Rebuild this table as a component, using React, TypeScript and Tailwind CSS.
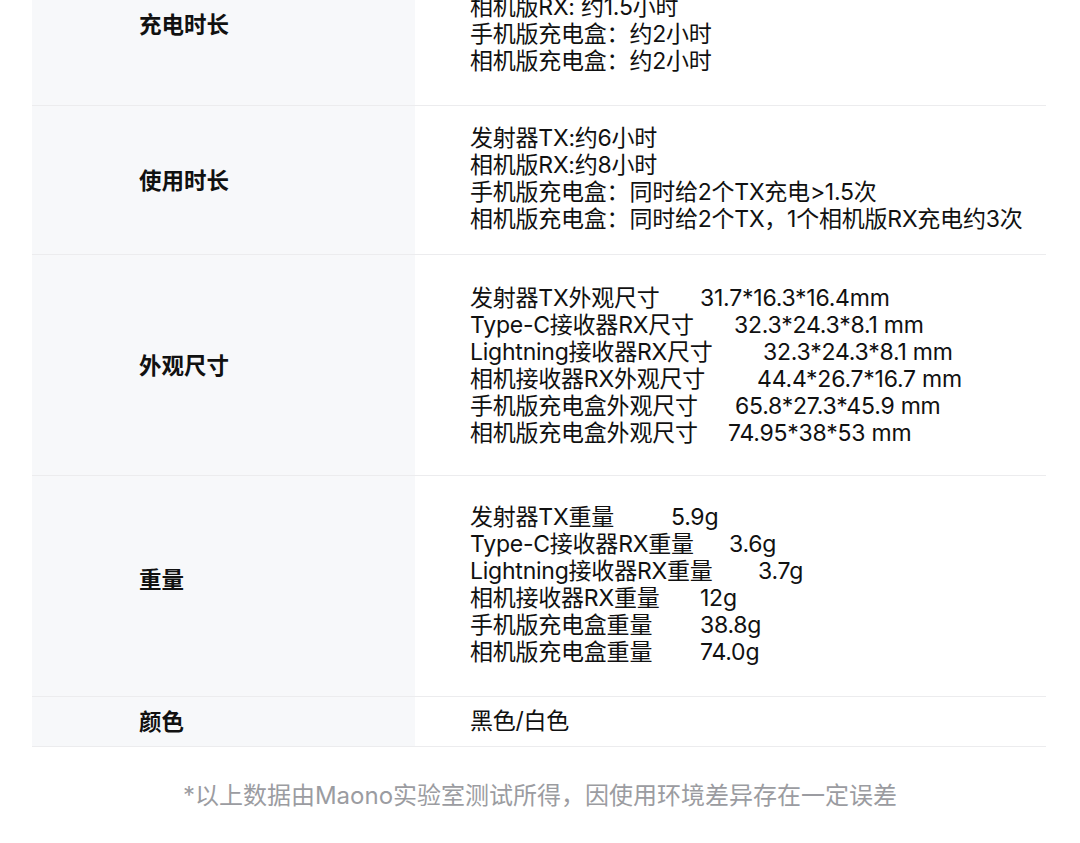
import React from "react";

type Line = { name: string; value?: string; w?: number };

const FONT = "font-['Inter','Noto_Sans_CJK_SC',sans-serif]";

function Row({
  label,
  lines,
  h,
  labelShift = "",
}: {
  label: string;
  lines: React.ReactNode;
  h: string;
  labelShift?: string;
}) {
  return (
    <div className={`flex ${h} border-b border-[#ececee]`}>
      <div className="w-[383px] shrink-0 bg-[#f7f8fa] flex items-center pl-[107px]">
        <span className={`text-[22.5px] font-bold text-[#111] leading-[27px] ${labelShift}`}>{label}</span>
      </div>
      <div className="flex-1 flex flex-col justify-center pl-[55px] text-[23px] leading-[27px] text-[#111] tracking-[-0.01em]">
        {lines}
      </div>
    </div>
  );
}

function Pairs({ items }: { items: Line[] }) {
  return (
    <>
      {items.map((it, i) => (
        <div key={i} className="flex whitespace-nowrap">
          <span className="inline-block shrink-0" style={{ width: it.w }}>
            {it.name}
          </span>
          <span>{it.value}</span>
        </div>
      ))}
    </>
  );
}

export default function App() {
  return (
    <div className={`w-[1080px] h-[843px] overflow-hidden bg-white ${FONT}`}>
      <div className="mt-[-65px] mx-[32px] w-[1014px]">
        <Row
          label="充电时长"
          h="h-[171px] pt-[2px]"
          labelShift="mt-[6px]"
          lines={
            <>
              <div>发射器TX: 约1.5小时</div>
              <div>相机版RX: 约1.5小时</div>
              <div>手机版充电盒：约2小时</div>
              <div>相机版充电盒：约2小时</div>
            </>
          }
        />
        <Row
          label="使用时长"
          h="h-[149px]"
          lines={
            <div className="mt-[-2px]">
              <div>发射器TX:约6小时</div>
              <div>相机版RX:约8小时</div>
              <div>手机版充电盒：同时给2个TX充电&gt;1.5次</div>
              <div>相机版充电盒：同时给2个TX，1个相机版RX充电约3次</div>
            </div>
          }
        />
        <Row
          label="外观尺寸"
          h="h-[221px]"
          lines={
            <div className="mt-[2px]">
              <Pairs
                items={[
                  { name: "发射器TX外观尺寸", value: "31.7*16.3*16.4mm", w: 230 },
                  { name: "Type-C接收器RX尺寸", value: "32.3*24.3*8.1 mm", w: 264 },
                  { name: "Lightning接收器RX尺寸", value: "32.3*24.3*8.1 mm", w: 293 },
                  { name: "相机接收器RX外观尺寸", value: "44.4*26.7*16.7 mm", w: 287 },
                  { name: "手机版充电盒外观尺寸", value: "65.8*27.3*45.9 mm", w: 265 },
                  { name: "相机版充电盒外观尺寸", value: "74.95*38*53 mm", w: 258 },
                ]}
              />
            </div>
          }
        />
        <Row
          label="重量"
          h="h-[221px]"
          labelShift="mb-[14px]"
          lines={
            <div className="mt-[-2px]">
              <Pairs
                items={[
                  { name: "发射器TX重量", value: "5.9g", w: 201 },
                  { name: "Type-C接收器RX重量", value: "3.6g", w: 259 },
                  { name: "Lightning接收器RX重量", value: "3.7g", w: 288 },
                  { name: "相机接收器RX重量", value: "12g", w: 230 },
                  { name: "手机版充电盒重量", value: "38.8g", w: 230 },
                  { name: "相机版充电盒重量", value: "74.0g", w: 230 },
                ]}
              />
            </div>
          }
        />
        <Row label="颜色" h="h-[50px]" lines={<div>黑色/白色</div>} />
      </div>
      <div className="pt-[35px] text-center text-[24px] leading-[27px] text-[#9b9ca1]">
        *以上数据由Maono实验室测试所得，因使用环境差异存在一定误差
      </div>
    </div>
  );
}
